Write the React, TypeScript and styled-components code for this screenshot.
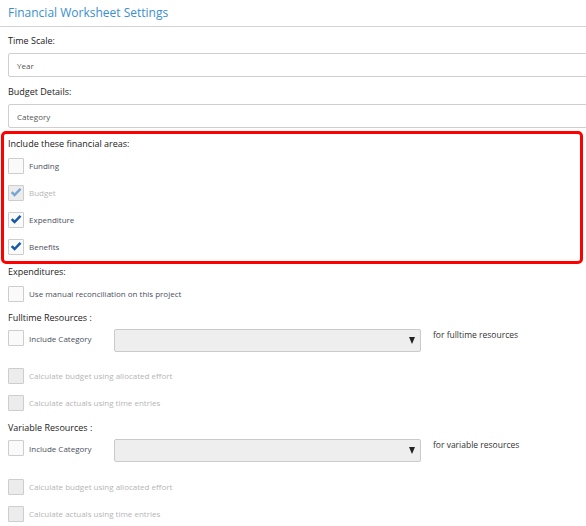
import styled, { createGlobalStyle } from 'styled-components'

const Global = createGlobalStyle`
  html, body {
    margin: 0;
    padding: 0;
    background: #fff;
    overflow: hidden;
  }
  body {
    font-family: "Open Sans", "Noto Sans", sans-serif;
    color: #333;
  }
`

const Page = styled.div`
  width: 586px;
`

const Title = styled.h2`
  margin: 0;
  padding: 4px 8px 0;
  height: 22px;
  font-size: 12px;
  font-weight: 400;
  color: #3a8fd0;
  border-bottom: 1px solid #d4d4d4;
`

const Body = styled.div`
  padding: 0 0 0 8px;
`

const FieldLabel = styled.div<{ $top?: number; $bottom?: number }>`
  font-size: 9px;
  color: #222;
  line-height: 12px;
  margin: ${(p) => p.$top ?? 8}px 0 ${(p) => p.$bottom ?? 2}px;
`

const TextBox = styled.div`
  height: 22px;
  margin-right: -20px;
  border: 1px solid #cfcfcf;
  border-radius: 2px;
  display: flex;
  align-items: center;
  padding-left: 8px;
  font-size: 8px;
  color: #555;
`

const Highlight = styled.section`
  margin: 3px 3px 0 -7px;
  padding: 4px 0 1px 4px;
  border: 3px solid #ff0000;
  border-radius: 5px;
`

const Row = styled.label`
  display: flex;
  align-items: center;
  height: 27px;
  gap: 5px;
`

const Box = styled.span<{ $disabled?: boolean }>`
  box-sizing: border-box;
  width: 16px;
  height: 16px;
  border: 1px solid #cdcdcd;
  border-radius: 1px;
  background: ${(p) => (p.$disabled ? '#ececec' : '#fafafa')};
  display: flex;
  align-items: center;
  justify-content: center;
  flex-shrink: 0;
`

const BoxText = styled.span<{ $disabled?: boolean }>`
  font-size: 8px;
  color: ${(p) => (p.$disabled ? '#b5b5b5' : '#4a5060')};
`

const CategoryRow = styled.div<{ $height: number }>`
  display: flex;
  align-items: flex-start;
  height: ${(p) => p.$height}px;
`

const CatLabel = styled(Row)`
  width: 106px;
  height: 16px;
  margin-top: 1px;
`

const SelectBox = styled.div`
  width: 307px;
  height: 23px;
  border: 1px solid #cacaca;
  border-radius: 2px;
  background: #eeeeee;
  display: flex;
  align-items: center;
  justify-content: flex-end;
  padding-right: 5px;
  box-sizing: border-box;
`

const Arrow = styled.span`
  width: 0;
  height: 0;
  border-left: 3.5px solid transparent;
  border-right: 3.5px solid transparent;
  border-top: 7px solid #222;
`

const ForText = styled.span`
  font-size: 8.5px;
  line-height: 12px;
  color: #333;
  margin: 0 0 0 12px;
`

function Check({ muted }: { muted?: boolean }) {
  return (
    <svg width="12" height="11" viewBox="0 0 12 11">
      <path
        d="M0.8 6 L2.6 4.2 L4.6 6.2 L9.6 1 L11.4 2.8 L4.6 9.7 Z"
        fill={muted ? '#7aa6d6' : '#1858a6'}
      />
    </svg>
  )
}

interface CheckRowProps {
  text: string
  checked?: boolean
  disabled?: boolean
}

function CheckRow({ text, checked, disabled }: CheckRowProps) {
  return (
    <Row>
      <Box $disabled={disabled}>{checked && <Check muted={disabled} />}</Box>
      <BoxText $disabled={disabled}>{text}</BoxText>
    </Row>
  )
}

interface CategoryBlockProps {
  label: string
  forText: string
  top: number
  bottom: number
  rowHeight: number
}

function CategoryBlock({ label, forText, top, bottom, rowHeight }: CategoryBlockProps) {
  return (
    <>
      <FieldLabel $top={top} $bottom={bottom}>{label}</FieldLabel>
      <CategoryRow $height={rowHeight}>
        <CatLabel>
          <Box />
          <BoxText>Include Category</BoxText>
        </CatLabel>
        <SelectBox>
          <Arrow />
        </SelectBox>
        <ForText>{forText}</ForText>
      </CategoryRow>
      <CheckRow text="Calculate budget using allocated effort" disabled />
      <CheckRow text="Calculate actuals using time entries" disabled />
    </>
  )
}

export default function App() {
  return (
    <Page>
      <Global />
      <Title>Financial Worksheet Settings</Title>
      <Body>
        <FieldLabel $top={8} $bottom={6}>Time Scale:</FieldLabel>
        <TextBox>Year</TextBox>
        <FieldLabel $top={9} $bottom={6}>Budget Details:</FieldLabel>
        <TextBox>Category</TextBox>
        <Highlight>
          <FieldLabel $top={0}>Include these financial areas:</FieldLabel>
          <CheckRow text="Funding" />
          <CheckRow text="Budget" checked disabled />
          <CheckRow text="Expenditure" checked />
          <CheckRow text="Benefits" checked />
        </Highlight>
        <FieldLabel $top={2}>Expenditures:</FieldLabel>
        <CheckRow text="Use manual reconciliation on this project" />
        <CategoryBlock
          label="Fulltime Resources :"
          forText="for fulltime resources"
          top={5}
          bottom={5}
          rowHeight={33}
        />
        <CategoryBlock
          label="Variable Resources :"
          forText="for variable resources"
          top={6}
          bottom={5}
          rowHeight={34}
        />
      </Body>
    </Page>
  )
}
